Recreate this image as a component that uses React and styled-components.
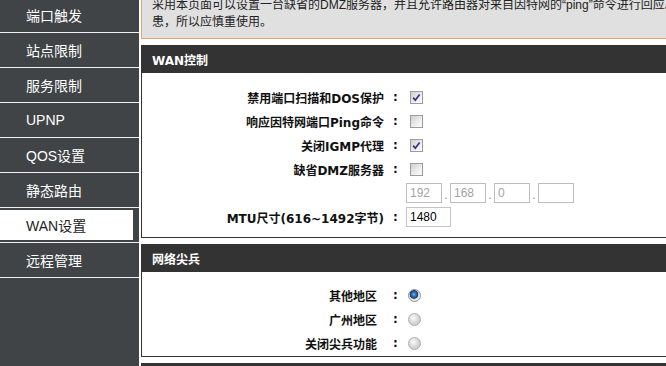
import React from 'react';
import styled, { createGlobalStyle } from 'styled-components';

const GlobalStyle = createGlobalStyle`
  html, body { margin: 0; padding: 0; background: #ffffff; overflow: hidden; }
  body { font-family: "Liberation Sans", "Noto Sans CJK SC", sans-serif; }
`;

const Page = styled.div`
  display: flex;
  align-items: stretch;
  gap: 2px;
  width: 780px;
  margin-top: -4px;
  min-height: calc(100vh + 4px);
`;

const Sidebar = styled.nav`
  flex: 0 0 139px;
  width: 139px;
  background: #414446;
  padding-top: 2px;
  display: flex;
  flex-direction: column;
`;

const NavItem = styled.div`
  box-sizing: border-box;
  height: 35px;
  border-bottom: 1px solid #f0f0f0;
  padding: 2px 6px 2px 0;
  display: flex;
`;

const NavLabel = styled.span`
  flex: 1;
  display: flex;
  align-items: center;
  padding-left: 26px;
  font-family: "Liberation Sans", "Noto Sans CJK SC", sans-serif;
  font-size: 14px;
  color: ${(p) => (p.$active ? '#1e1e1e' : '#ffffff')};
  background: ${(p) => (p.$active ? '#ffffff' : 'transparent')};
`;

const Main = styled.main`
  flex: 1;
  display: flex;
  flex-direction: column;
  gap: 6px;
`;

const Notice = styled.div`
  border: 1px solid #e3a46f;
  background: #e0e0e0;
  padding: 0 10px 7px;
  font-size: 12px;
  line-height: 17px;
  color: #222;
  white-space: nowrap;
  overflow: hidden;
`;

const Section = styled.section`
  border: 1px solid #333333;
  background: #ffffff;
`;

const SectionHeader = styled.h2`
  margin: 0;
  height: 27px;
  display: flex;
  align-items: center;
  padding-left: 10px;
  background: #333333;
  color: #ffffff;
  font-family: "DejaVu Sans", "Noto Sans CJK SC", sans-serif;
  font-size: 12px;
  font-weight: bold;
`;

const SectionBody = styled.div`
  padding: ${(p) => p.$pad};
`;

const Row = styled.div`
  display: grid;
  grid-template-columns: 243px 21px 1fr;
  align-items: center;
  height: 24px;
`;

const Label = styled.span`
  text-align: right;
  font-family: "DejaVu Sans", "Noto Sans CJK SC", sans-serif;
  font-size: 12px;
  font-weight: bold;
  color: #111;
  padding-right: ${(p) => p.$pr || 1}px;
  white-space: nowrap;
`;

const Colon = styled.span`
  text-align: center;
  font-family: "DejaVu Sans", sans-serif;
  font-size: 12px;
  font-weight: bold;
  color: #111;
`;

const Value = styled.div`
  display: flex;
  align-items: center;
`;

const CheckBox = styled.span`
  box-sizing: border-box;
  width: 13px;
  height: 13px;
  margin-left: 4px;
  border: 1px solid #9c9c9c;
  background: linear-gradient(135deg, #cfcfcf 0%, #ececec 55%, #fbfbfb 100%);
  display: inline-flex;
  align-items: center;
  justify-content: center;
`;

const Radio = styled.span`
  box-sizing: border-box;
  width: 13px;
  height: 13px;
  margin-left: 2px;
  border-radius: 50%;
  border: 1px solid ${(p) => (p.$checked ? '#8a8f96' : '#ababab')};
  background: ${(p) =>
    p.$checked
      ? 'radial-gradient(circle at 45% 40%, #9cc8ec 0, #3b7fbf 1.5px, #1d4f86 3.5px, #173a63 4px, #d0d0d0 4.6px, #f0f0f0 6px)'
      : 'radial-gradient(circle at 40% 35%, #fbfbfb 0, #e6e6e6 3px, #cfcfcf 6px)'};
`;

const TextInput = styled.input`
  box-sizing: border-box;
  width: ${(p) => p.$w}px;
  height: 20px;
  margin: 0;
  padding: 0 3px;
  border: 1px solid ${(p) => (p.disabled ? '#bdbdbd' : '#c4c4c4')};
  background: #ffffff;
  font-family: "Liberation Sans", sans-serif;
  font-size: 12px;
  color: ${(p) => (p.disabled ? '#a3a3a3' : '#000000')};
  outline: none;
  -webkit-text-fill-color: ${(p) => (p.disabled ? '#a3a3a3' : '#000000')};
  opacity: 1;
`;

const Dot = styled.span`
  width: 8px;
  text-align: center;
  font-size: 12px;
  color: #9a9a9a;
  align-self: flex-end;
  line-height: 16px;
`;

const Check = ({ checked }) => (
  <CheckBox>
    {checked && (
      <svg width="11" height="11" viewBox="0 0 11 11">
        <path d="M2.2 5.6 L4.3 8.2 L8.6 2.4" fill="none" stroke="#27357f" strokeWidth="1.7" />
      </svg>
    )}
  </CheckBox>
);

const navItems = ['端口触发', '站点限制', '服务限制', 'UPNP', 'QOS设置', '静态路由', 'WAN设置', '远程管理'];

export default function App() {
  return (
    <>
      <GlobalStyle />
      <Page>
        <Sidebar>
          {navItems.map((t) => (
            <NavItem key={t}>
              <NavLabel $active={t === 'WAN设置'}>{t}</NavLabel>
            </NavItem>
          ))}
        </Sidebar>
        <Main>
          <Notice>
            采用本页面可以设置一台缺省的DMZ服务器，并且允许路由器对来自因特网的“ping”命令进行回应。
            <br />
            患，所以应慎重使用。
          </Notice>

          <Section>
            <SectionHeader>WAN控制</SectionHeader>
            <SectionBody $pad="12px 0 8px">
              <Row>
                <Label>禁用端口扫描和DOS保护</Label>
                <Colon>:</Colon>
                <Value><Check checked /></Value>
              </Row>
              <Row>
                <Label>响应因特网端口Ping命令</Label>
                <Colon>:</Colon>
                <Value><Check /></Value>
              </Row>
              <Row>
                <Label>关闭IGMP代理</Label>
                <Colon>:</Colon>
                <Value><Check checked /></Value>
              </Row>
              <Row>
                <Label>缺省DMZ服务器</Label>
                <Colon>:</Colon>
                <Value><Check /></Value>
              </Row>
              <Row>
                <Label />
                <Colon />
                <Value>
                  <TextInput $w={36} disabled defaultValue="192" />
                  <Dot>.</Dot>
                  <TextInput $w={36} disabled defaultValue="168" />
                  <Dot>.</Dot>
                  <TextInput $w={36} disabled defaultValue="0" />
                  <Dot>.</Dot>
                  <TextInput $w={36} disabled defaultValue="" />
                </Value>
              </Row>
              <Row>
                <Label>MTU尺寸(616~1492字节)</Label>
                <Colon>:</Colon>
                <Value><TextInput $w={45} defaultValue="1480" /></Value>
              </Row>
            </SectionBody>
          </Section>

          <Section>
            <SectionHeader>网络尖兵</SectionHeader>
            <SectionBody $pad="11px 0 1px">
              <Row>
                <Label $pr={8}>其他地区</Label>
                <Colon>:</Colon>
                <Value><Radio $checked /></Value>
              </Row>
              <Row>
                <Label $pr={8}>广州地区</Label>
                <Colon>:</Colon>
                <Value><Radio /></Value>
              </Row>
              <Row>
                <Label $pr={8}>关闭尖兵功能</Label>
                <Colon>:</Colon>
                <Value><Radio /></Value>
              </Row>
            </SectionBody>
          </Section>

          <Section>
            <SectionHeader />
            <SectionBody $pad="40px 0" />
          </Section>
        </Main>
      </Page>
    </>
  );
}
